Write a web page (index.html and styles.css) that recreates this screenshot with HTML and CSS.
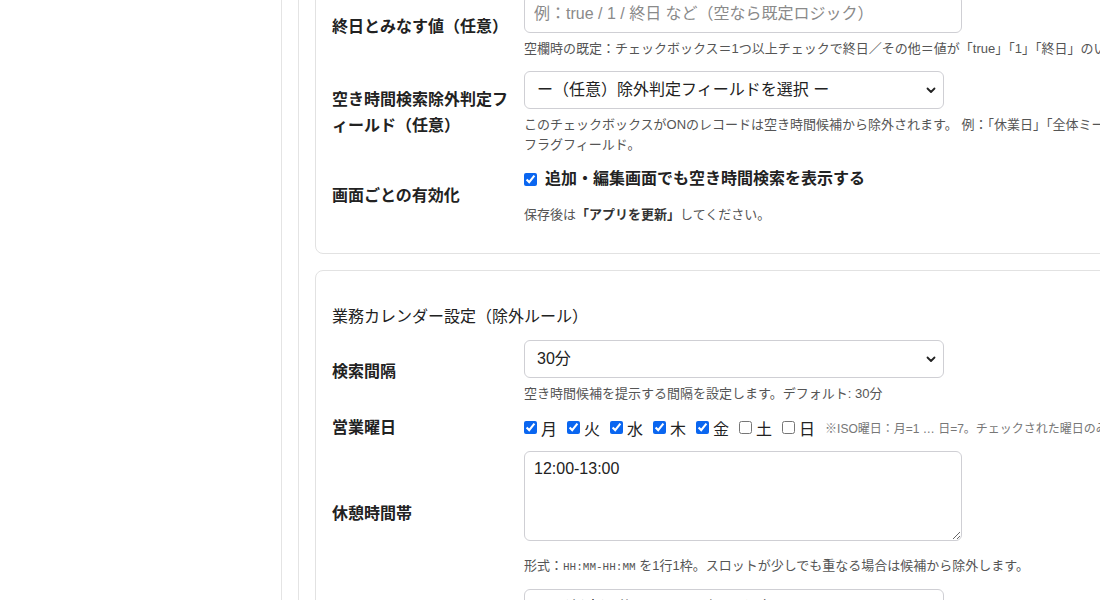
FILE: index.html
```html
<!DOCTYPE html>
<html lang="ja">
<head>
<meta charset="utf-8">
<title>設定</title>
<link rel="stylesheet" href="styles.css">
</head>
<body>
<div class="app">
  <aside class="sidebar"></aside>
  <main class="main">
    <div class="content">
      <section class="card">
        <div class="row">
          <div class="label">終日とみなす値（任意）</div>
          <div class="control">
            <input class="input" type="text" placeholder="例：true / 1 / 終日 など（空なら既定ロジック）">
            <div class="help nowrap">空欄時の既定：チェックボックス＝1つ以上チェックで終日／その他＝値が「true」「1」「終日」のいずれかで終日と判定します。</div>
          </div>
        </div>
        <div class="row">
          <div class="label">空き時間検索除外判定フィールド（任意）</div>
          <div class="control">
            <div class="select-wrap">
              <select class="select"><option>ー（任意）除外判定フィールドを選択 ー</option></select>
              <svg class="chev" width="10" height="7" viewBox="0 0 10 7"><path d="M1.5 1.5 L5 5 L8.5 1.5" fill="none" stroke="#222" stroke-width="1.8" stroke-linecap="round" stroke-linejoin="round"/></svg>
            </div>
            <div class="help nowrap">このチェックボックスがONのレコードは空き時間候補から除外されます。 例：「休業日」「全体ミーティング」などの<br>フラグフィールド。</div>
          </div>
        </div>
        <div class="row">
          <div class="label">画面ごとの有効化</div>
          <div class="control">
            <label class="check-line"><input type="checkbox" class="cb" checked><span>追加・編集画面でも空き時間検索を表示する</span></label>
            <div class="help help-far">保存後は<b>「アプリを更新」</b>してください。</div>
          </div>
        </div>
      </section>

      <section class="card">
        <h3 class="card-title">業務カレンダー設定（除外ルール）</h3>
        <div class="row">
          <div class="label">検索間隔</div>
          <div class="control">
            <div class="select-wrap">
              <select class="select"><option>30分</option></select>
              <svg class="chev" width="10" height="7" viewBox="0 0 10 7"><path d="M1.5 1.5 L5 5 L8.5 1.5" fill="none" stroke="#222" stroke-width="1.8" stroke-linecap="round" stroke-linejoin="round"/></svg>
            </div>
            <div class="help">空き時間候補を提示する間隔を設定します。デフォルト: 30分</div>
          </div>
        </div>
        <div class="row">
          <div class="label label-tight">営業曜日</div>
          <div class="control">
            <div class="days">
              <label class="day"><input type="checkbox" class="cb" checked>月</label>
              <label class="day"><input type="checkbox" class="cb" checked>火</label>
              <label class="day"><input type="checkbox" class="cb" checked>水</label>
              <label class="day"><input type="checkbox" class="cb" checked>木</label>
              <label class="day"><input type="checkbox" class="cb" checked>金</label>
              <label class="day"><input type="checkbox" class="cb">土</label>
              <label class="day"><input type="checkbox" class="cb">日</label>
              <span class="note">※ISO曜日：月=1 … 日=7。チェックされた曜日のみ営業日として扱います。</span>
            </div>
          </div>
        </div>
        <div class="row">
          <div class="label">休憩時間帯</div>
          <div class="control">
            <textarea class="textarea">12:00-13:00</textarea>
            <div class="help help-ta">形式：<code>HH:MM-HH:MM</code> を1行1枠。スロットが少しでも重なる場合は候補から除外します。</div>
          </div>
        </div>
        <div class="row">
          <div class="label">休日カレンダー</div>
          <div class="control">
            <div class="select-wrap">
              <select class="select"><option>ー（任意）休日カレンダーを選択 ー</option></select>
            </div>
            <div class="help">選択したカレンダーの予定がある日は候補から除外します。</div>
            <div class="help">未選択の場合は休日判定を行いません。</div>
          </div>
        </div>
      </section>
    </div>
  </main>
</div>
</body>
</html>
```
FILE: styles.css
```css
html, body {
  margin: 0;
  padding: 0;
  overflow: hidden;
  background: #fff;
}
body {
  font-family: "Liberation Sans", "Noto Sans CJK JP", sans-serif;
  color: #222;
  font-size: 16px;
}
.app {
  display: flex;
  min-height: 100vh;
}
.sidebar {
  width: 281px;
  flex: none;
  border-right: 1px solid #e4e4e4;
}
.main {
  flex: none;
  width: 1100px;
  margin-left: 16px;
  border-left: 1px solid #e4e4e4;
  padding-left: 16px;
}
.content {
  margin-top: -22px;
}
.card {
  border: 1px solid #e2e2e2;
  border-radius: 8px;
  padding: 16px;
  margin-bottom: 16px;
}
.card-title {
  margin: 18px 0 11px;
  font-size: 16px;
  line-height: 24px;
  font-weight: 400;
  color: #222;
}
.row {
  display: grid;
  grid-template-columns: 180px 1fr;
  column-gap: 12px;
  align-items: center;
  margin-bottom: 12px;
}
.label {
  font-weight: 700;
  font-size: 16px;
  line-height: 26px;
  color: #222;
}
.label-tight {
  line-height: 22px;
}
.control {
  min-width: 0;
}
.input, .select, .textarea {
  display: block;
  box-sizing: border-box;
  border: 1px solid #cfcfd4;
  border-radius: 6px;
  background: #fff;
  font-family: inherit;
  font-size: 16px;
  line-height: 24px;
  color: #222;
  padding: 6px 12px;
  margin: 0;
}
.input {
  width: 438px;
  height: 38px;
  padding-left: 9px;
}
.input::placeholder {
  color: #8a8a8a;
}
.select-wrap {
  position: relative;
  width: 420px;
}
.select {
  width: 420px;
  height: 38px;
  -webkit-appearance: none;
  appearance: none;
}
.chev {
  position: absolute;
  right: 8px;
  top: 16px;
}
.textarea {
  width: 438px;
  height: 90px;
  padding: 5px 9px;
  resize: vertical;
}
.help {
  margin-top: 6px;
  font-size: 13px;
  line-height: 20px;
  color: #555;
}
.help b {
  color: #333;
}
.nowrap {
  white-space: nowrap;
}
.help-far {
  margin-top: 18px;
}
.help-ta {
  margin-top: 15px;
  white-space: nowrap;
}
.help code {
  font-family: "Liberation Mono", monospace;
  font-size: 11px;
}
.check-line {
  display: flex;
  align-items: center;
  gap: 8px;
  height: 20px;
  font-weight: 700;
  font-size: 16px;
}
.check-line .cb {
  margin-top: 4px;
}
.cb {
  width: 13px;
  height: 13px;
  margin: 0;
  accent-color: #0a66f0;
}
.days {
  display: flex;
  align-items: center;
  height: 23px;
  white-space: nowrap;
}
.day {
  display: flex;
  align-items: center;
  gap: 4px;
  font-size: 16px;
  margin-right: 10px;
}
.note {
  margin-left: 0;
  font-size: 12px;
  color: #777;
}
```
